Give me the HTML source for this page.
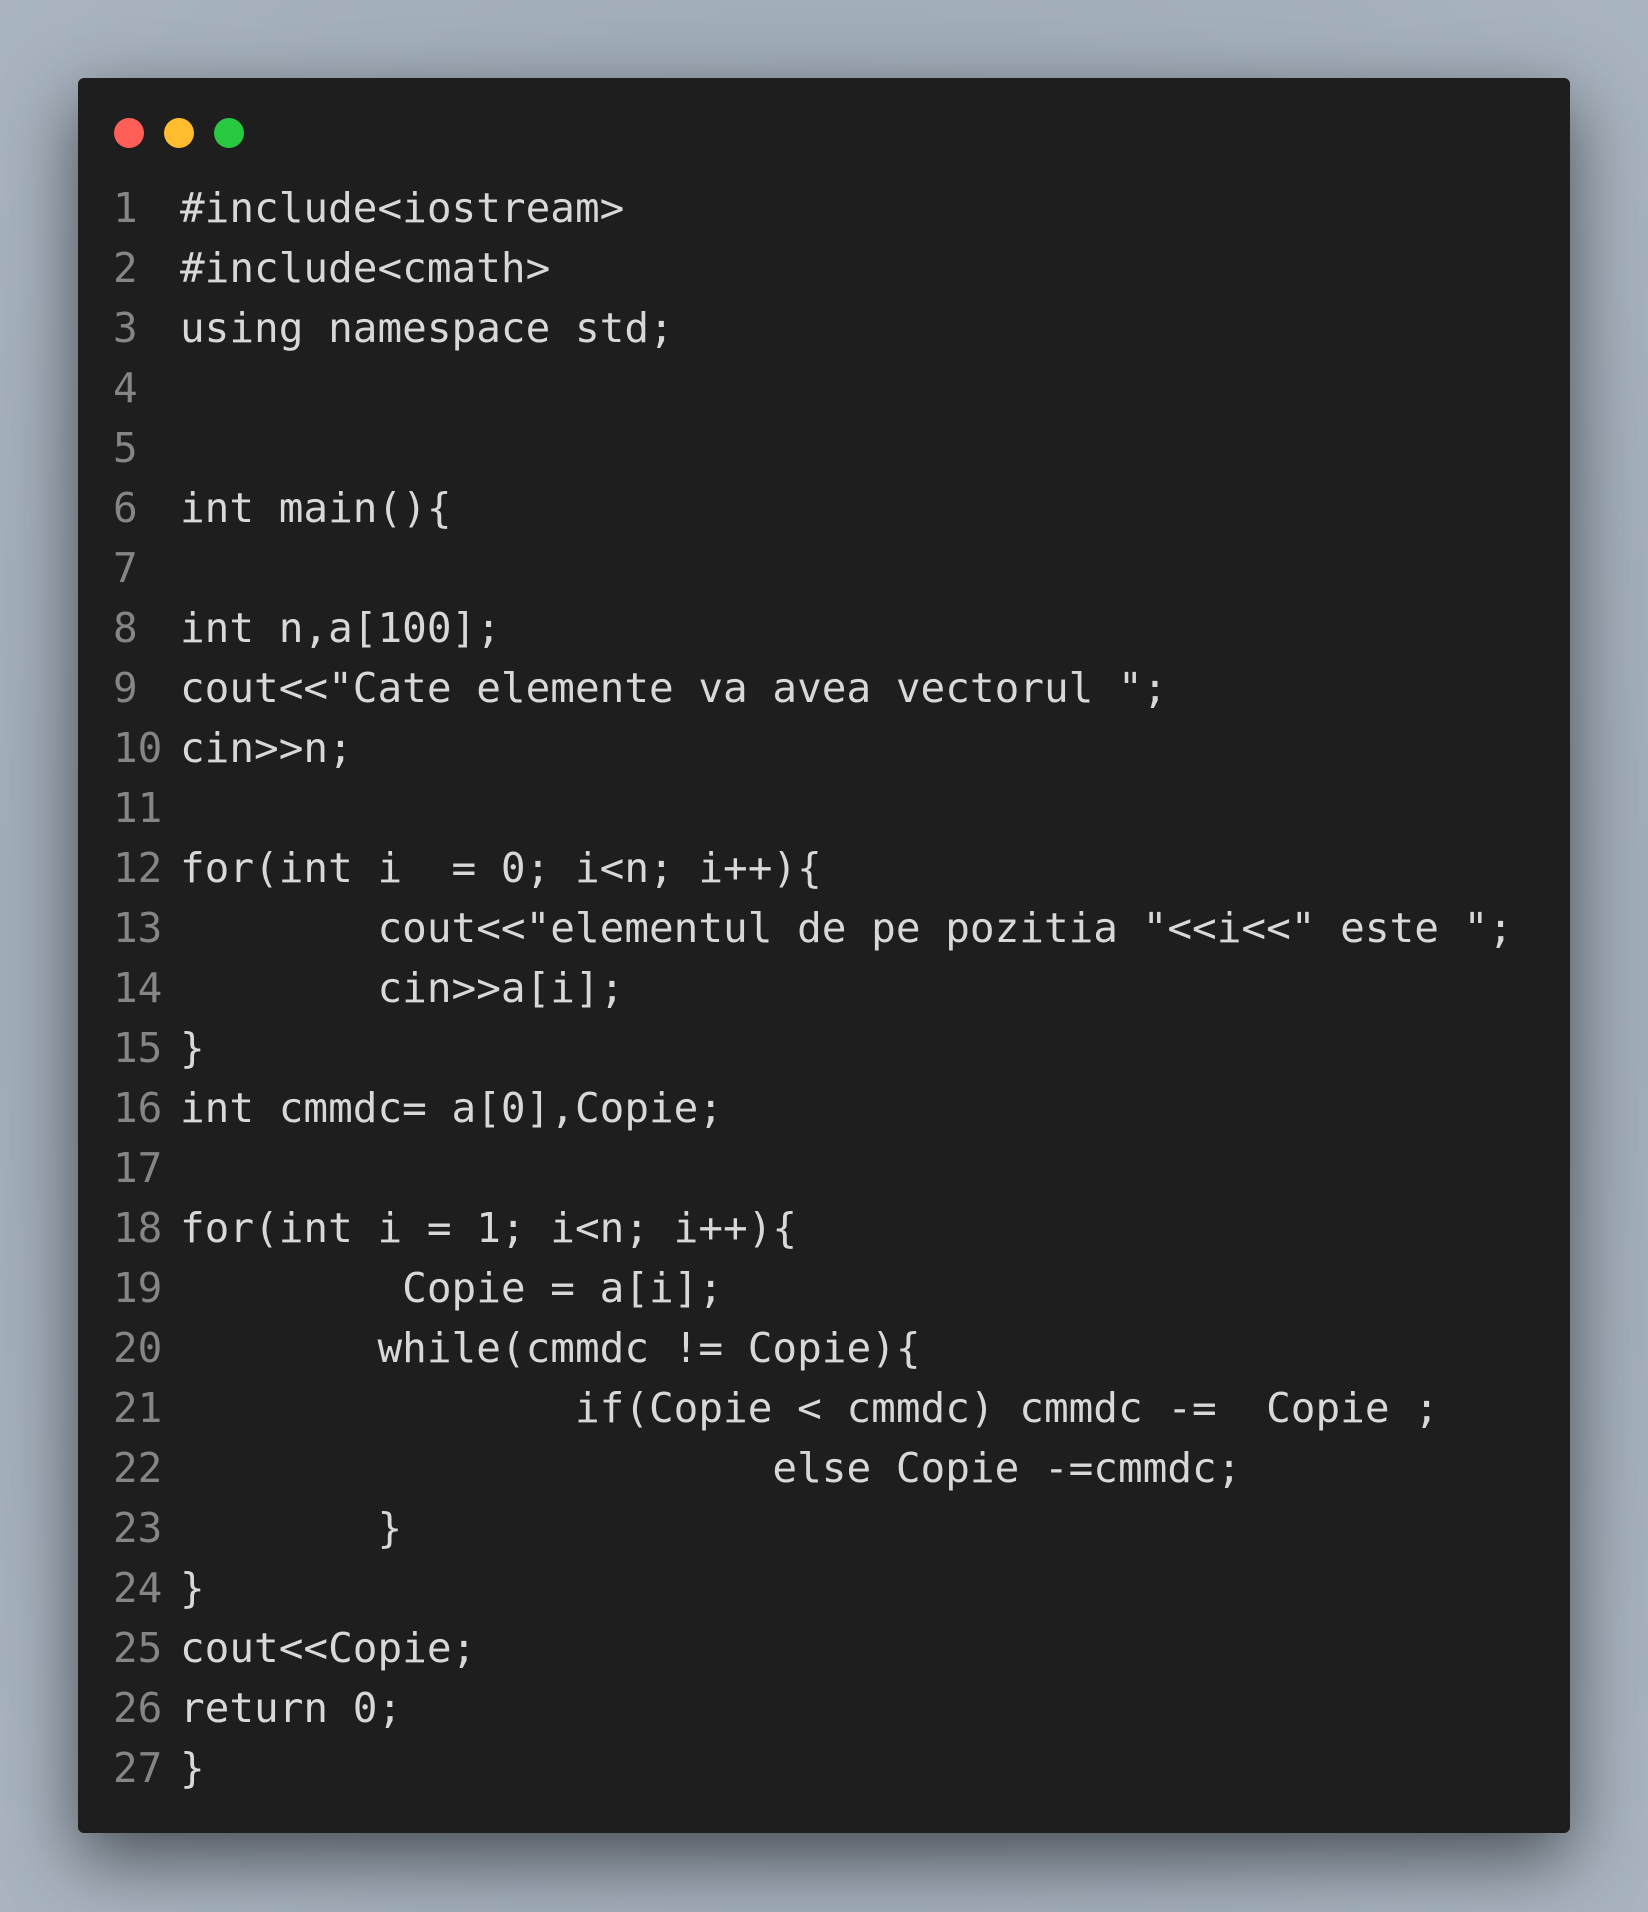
<!DOCTYPE html>
<html><head><meta charset="utf-8"><style>
html,body{margin:0;padding:0;}
body{width:1648px;height:1912px;background:radial-gradient(ellipse at 50% 50%,#8a949f 0%,#a0abb8 60%,#a9b4c0 100%);position:relative;overflow:hidden;}
.win{position:absolute;left:78px;top:78px;width:1492px;height:1755px;background:#1e1e1e;border-radius:6px;box-shadow:0 25px 70px rgba(0,0,0,0.55);}
.dot{position:absolute;top:118px;width:30px;height:30px;border-radius:50%;}
.code{position:absolute;left:0;top:178px;font-family:"DejaVu Sans Mono","Liberation Mono",monospace;font-size:41px;line-height:60px;color:#d8d8d8;white-space:pre;}
.ln{display:inline-block;width:67px;padding-left:113px;color:#858585;}
</style></head><body>
<div class="win"></div>
<div class="dot" style="left:114px;background:#ff5f57"></div>
<div class="dot" style="left:164px;background:#febc2e"></div>
<div class="dot" style="left:214px;background:#28c840"></div>
<div class="code"><span class="ln">1</span>#include&lt;iostream&gt;
<span class="ln">2</span>#include&lt;cmath&gt;
<span class="ln">3</span>using namespace std;
<span class="ln">4</span>
<span class="ln">5</span>
<span class="ln">6</span>int main(){
<span class="ln">7</span>
<span class="ln">8</span>int n,a[100];
<span class="ln">9</span>cout&lt;&lt;"Cate elemente va avea vectorul ";
<span class="ln">10</span>cin&gt;&gt;n;
<span class="ln">11</span>
<span class="ln">12</span>for(int i  = 0; i&lt;n; i++){
<span class="ln">13</span>        cout&lt;&lt;"elementul de pe pozitia "&lt;&lt;i&lt;&lt;" este ";
<span class="ln">14</span>        cin&gt;&gt;a[i];
<span class="ln">15</span>}
<span class="ln">16</span>int cmmdc= a[0],Copie;
<span class="ln">17</span>
<span class="ln">18</span>for(int i = 1; i&lt;n; i++){
<span class="ln">19</span>         Copie = a[i];
<span class="ln">20</span>        while(cmmdc != Copie){
<span class="ln">21</span>                if(Copie &lt; cmmdc) cmmdc -=  Copie ;
<span class="ln">22</span>                        else Copie -=cmmdc;
<span class="ln">23</span>        }
<span class="ln">24</span>}
<span class="ln">25</span>cout&lt;&lt;Copie;
<span class="ln">26</span>return 0;
<span class="ln">27</span>}</div>
</body></html>
